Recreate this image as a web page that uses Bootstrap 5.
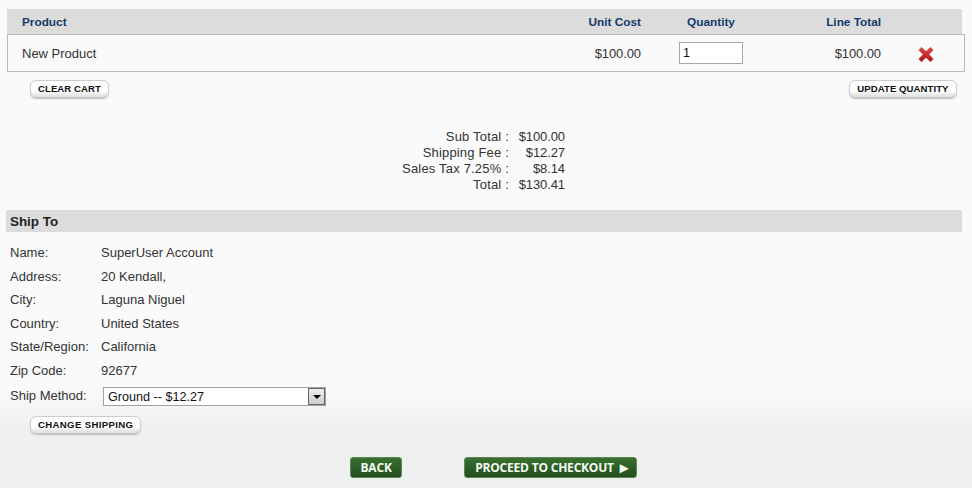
<!DOCTYPE html>
<html lang="en">
<head>
<meta charset="utf-8">
<title>Cart</title>
<link href="https://cdn.jsdelivr.net/npm/bootstrap@5.3.0/dist/css/bootstrap.min.css" rel="stylesheet">
<style>
html,body{height:488px;overflow:hidden}
body{background:linear-gradient(#fafafa 0,#fafafa 388px,#efefef 430px,#efefef 100%);font-family:"Liberation Sans",Arial,sans-serif;font-size:13px;line-height:16px;color:#333;padding:9px 7px 0 7px;width:972px}
.cart-head{background:#dcdcdc;height:25px;width:955px;color:#123a6b;font-weight:700;font-size:11.8px}
.cart-line{height:38px;width:958px;border:1px solid #bbb;color:#333;padding-top:2px}
.c-name{width:500px;padding-left:14px}
.cart-line .c-name{width:499px}
.c-cost{width:134px;text-align:right}
.c-qty{width:140px;text-align:center}
.c-total{width:100px;text-align:right}
.c-del{flex:1 1 auto;padding-left:6px}
.cart-head .c-name{padding-left:15px}
.qty-input{width:64px;height:22px;border:1px solid #a8a8a8;padding:0 3px;font:12.6px "Liberation Sans",sans-serif;color:#111;background:#fff;display:block;margin:-2px auto 0 38px;border-radius:0}
.mini-btn{font:700 9.6px/1 "Liberation Sans",sans-serif;letter-spacing:.05px;color:#111;background:linear-gradient(#fff 0,#fff 60%,#ddd 100%);border:1px solid #ccc;border-radius:6px;height:18px;padding:0 7px;box-shadow:0 1px 1px #bbb}
.mini-wide{letter-spacing:.35px}
.mini-upd{letter-spacing:.05px;padding:0 7.5px}
.btn-row{padding:8px 8px 0 23px;width:958px}
.sum-wrap{margin-top:31px;width:558px;color:#333;margin-bottom:17px}
.sum-grid{display:grid;grid-template-columns:auto 56px;justify-content:end}
.sum-key{letter-spacing:.18px}
.sum-val{letter-spacing:-.1px}
.ship-head{background:#dcdcdc;height:22px;width:956px;margin-left:-1px;font-weight:700;font-size:13.4px;color:#222;padding:4px 0 0 4px}
.ship-list{padding:13px 0 0 3px}
.ship-row{height:23.5px}
.ship-lab{width:91px}
.sel-last{height:30px}
.sel-last .ship-lab{margin-top:2px}
.ship-sel{width:223px;height:19px;margin-left:2px;margin-top:1px;border:1px solid #a0a0a8;background:#fff;padding:0 0 0 4px;font-size:12.6px;color:#111}
.sel-arrow{width:17px;height:17px;border:1px solid #666;background:linear-gradient(#eee,#ccc)}
.sel-arrow::after{content:"";border-left:4px solid transparent;border-right:4px solid transparent;border-top:4px solid #000;margin-top:1px}
.change-wrap{padding-left:23px}
.green-btn{font:700 12px/1 "Open Sans",sans-serif;letter-spacing:-.2px;color:#f4fbf0;background:linear-gradient(#39702f,#234f20);border:1px solid #5c8558;border-radius:3px;height:21px;padding:0 9.5px}
.go-btn{margin-left:62px;padding:0 0 0 10px;width:173px;white-space:nowrap;text-align:left}
.go-tri{font-size:15px;line-height:1;vertical-align:-1px}
.foot-row{padding-top:23px;padding-left:343px}
</style>
</head>
<body>
<div class="cart-head d-flex align-items-center">
  <div class="c-name">Product</div>
  <div class="c-cost">Unit Cost</div>
  <div class="c-qty">Quantity</div>
  <div class="c-total">Line Total</div>
</div>
<div class="cart-line d-flex align-items-center">
  <div class="c-name">New Product</div>
  <div class="c-cost sum-val">$100.00</div>
  <div class="c-qty"><input class="qty-input" type="text" value="1" aria-label="Quantity"></div>
  <div class="c-total sum-val">$100.00</div>
  <div class="c-del d-flex justify-content-center">
    <svg width="18" height="17" viewBox="0 0 18 17" aria-label="Remove"><defs><linearGradient id="rd" x1="0" y1="0" x2="0" y2="1"><stop offset="0" stop-color="#e2494b"/><stop offset="1" stop-color="#b01518"/></linearGradient></defs><path d="M1.500 4 4.500 1 9 5.300 13.500 1 16.500 4 12.200 8.500 16.500 13 13.500 16 9 11.700 4.500 16 1.500 13 5.800 8.500Z" fill="url(#rd)"/></svg>
  </div>
</div>
<div class="btn-row d-flex justify-content-between">
  <button class="mini-btn" type="button">CLEAR CART</button>
  <button class="mini-btn mini-upd" type="button">UPDATE QUANTITY</button>
</div>
<div class="sum-wrap">
  <div class="sum-grid">
    <span class="text-end sum-key">Sub Total :</span><span class="text-end sum-val">$100.00</span>
    <span class="text-end sum-key">Shipping Fee :</span><span class="text-end sum-val">$12.27</span>
    <span class="text-end sum-key">Sales Tax 7.25% :</span><span class="text-end sum-val">$8.14</span>
    <span class="text-end sum-key">Total :</span><span class="text-end sum-val">$130.41</span>
  </div>
</div>
<div class="ship-head">Ship To</div>
<div class="ship-list">
  <div class="ship-row d-flex"><div class="ship-lab">Name:</div><div>SuperUser Account</div></div>
  <div class="ship-row d-flex"><div class="ship-lab">Address:</div><div>20 Kendall,</div></div>
  <div class="ship-row d-flex"><div class="ship-lab">City:</div><div>Laguna Niguel</div></div>
  <div class="ship-row d-flex"><div class="ship-lab">Country:</div><div>United States</div></div>
  <div class="ship-row d-flex"><div class="ship-lab">State/Region:</div><div>California</div></div>
  <div class="ship-row d-flex"><div class="ship-lab">Zip Code:</div><div>92677</div></div>
  <div class="sel-last d-flex align-items-start"><div class="ship-lab">Ship Method:</div>
    <div class="ship-sel d-flex align-items-center justify-content-between"><span>Ground -- $12.27</span><span class="sel-arrow d-flex align-items-center justify-content-center"></span></div>
  </div>
</div>
<div class="change-wrap d-flex"><button class="mini-btn mini-wide" type="button">CHANGE SHIPPING</button></div>
<div class="foot-row d-flex">
  <button class="green-btn" type="button">BACK</button>
  <button class="green-btn go-btn" type="button">PROCEED TO CHECKOUT <span class="go-tri">►</span></button>
</div>
</body>
</html>
